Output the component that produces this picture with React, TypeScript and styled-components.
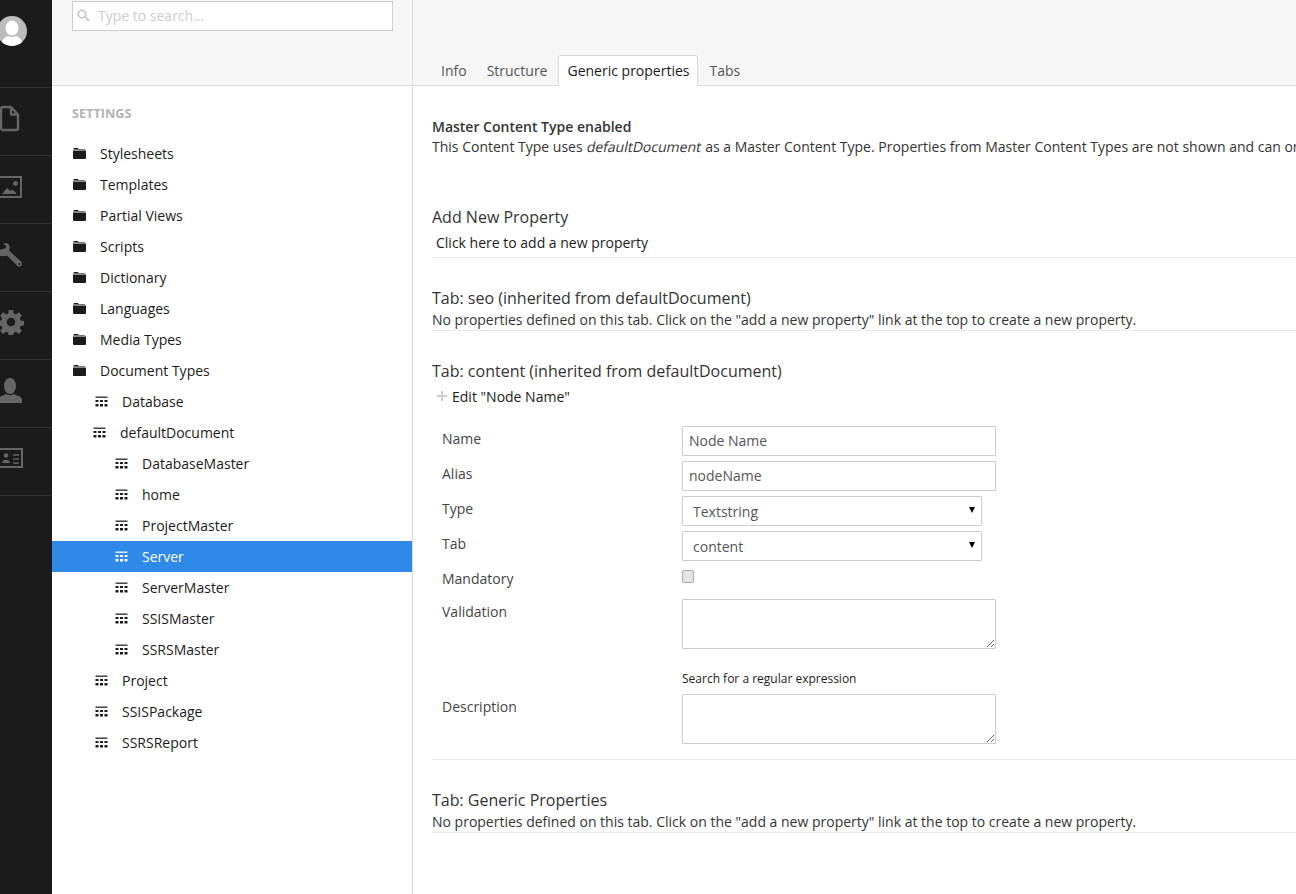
import React from 'react';
import styled, {createGlobalStyle} from 'styled-components';

const GlobalStyle = createGlobalStyle`
  html, body {
    margin: 0;
    padding: 0;
    height: 100%;
    overflow: hidden;
    background: #fff;
  }
  body {
    font-family: "Open Sans", "Liberation Sans", sans-serif;
    font-size: 14px;
    color: #343434;
  }
  * { box-sizing: border-box; }
`;

const Page = styled.div`
  display: flex;
  width: 1296px;
  height: 894px;
  overflow: hidden;
`;

const Rail = styled.nav`
  width: 52px;
  flex: none;
  background: #1b1b1b;
  overflow: hidden;
`;

const AvatarCell = styled.div`
  height: 88px;
  padding-top: 16px;
  border-bottom: 1px solid #333;
`;

const Avatar = styled.div`
  width: 30px;
  height: 30px;
  margin-left: -3px;
  border-radius: 50%;
  overflow: hidden;
  background: #bdbdbd;
  svg { display: block; }
`;

const RailItem = styled.div<{$lift: number}>`
  height: 68px;
  border-bottom: 1px solid #333;
  display: flex;
  align-items: center;
  padding-bottom: ${p => p.$lift}px;
  margin-left: -2px;
  color: #666;
  svg { display: block; }
`;

const TreePanel = styled.aside`
  width: 361px;
  flex: none;
  border-right: 1px solid #d9d9d9;
`;

const SearchBar = styled.div`
  height: 86px;
  background: #f6f6f6;
  border-bottom: 1px solid #d9d9d9;
  padding: 1px 19px 0 20px;
`;

const SearchBox = styled.div`
  height: 30px;
  background: #fff;
  border: 1px solid #ccc;
  display: flex;
  align-items: center;
  gap: 8px;
  padding: 0 0 2px 4px;
  color: #ccc;
  font-size: 14px;
`;

const SectionTitle = styled.h5`
  margin: 0;
  padding: 19px 0 0 20px;
  height: 52px;
  font-size: 12.7px;
  line-height: 17px;
  font-weight: 700;
  color: #b3b3b3;
`;

const TreeRow = styled.div<{$pad: number; $active?: boolean}>`
  height: 31px;
  display: flex;
  align-items: center;
  gap: 14px;
  width: 360px;
  padding-left: ${p => p.$pad}px;
  color: ${p => (p.$active ? '#fff' : '#1b1b1b')};
  background: ${p => (p.$active ? '#2e8ae6' : 'transparent')};
  svg { display: block; flex: none; }
`;

const Main = styled.main`
  flex: 1;
  min-width: 0;
  overflow: hidden;
`;

const TabBar = styled.div`
  height: 86px;
  background: #f6f6f6;
  border-bottom: 1px solid #d9d9d9;
  display: flex;
  align-items: flex-end;
  padding-left: 18px;
`;

const Tab = styled.div<{$active?: boolean}>`
  height: 31px;
  padding: 0 ${p => (p.$active ? '7px 0 8px' : '9px')};
  margin-bottom: -1px;
  margin-left: ${p => (p.$active ? 1 : 0)}px;
  margin-right: ${p => (p.$active ? 2 : 0)}px;
  line-height: 30px;
  color: ${p => (p.$active ? '#1b1b1b' : '#555')};
  background: ${p => (p.$active ? '#fff' : 'transparent')};
  border: 1px solid ${p => (p.$active ? '#d9d9d9' : 'transparent')};
  border-bottom-color: ${p => (p.$active ? '#fff' : 'transparent')};
  border-radius: 3px 3px 0 0;
`;

const Content = styled.div`
  padding: 31px 0 0 19px;
  white-space: nowrap;
`;

const Notice = styled.div`
  line-height: 20px;
  height: 89px;
  strong { font-weight: 600; }
`;

// the reference shows the upright face slanted, not the real italic
const Slanted = styled.span`
  display: inline-block;
  margin-left: 1px;
  transform: skewX(-12deg);
`;

const Section = styled.section<{$gap: number}>`
  margin-bottom: ${p => p.$gap}px;
  border-bottom: 1px solid #e9e9e9;
`;

const SectionHeading = styled.h4`
  margin: 0;
  font-size: 16px;
  font-weight: 400;
  line-height: 22px;
`;

const SectionText = styled.p`
  margin: 0;
  padding-top: 1px;
  line-height: 20px;
`;

const AddLink = styled.div`
  color: #1b1b1b;
  padding: 5px 0 4px 4px;
  line-height: 20px;
`;

const EditLink = styled.div`
  display: flex;
  align-items: center;
  gap: 5px;
  padding: 0 0 1px 5px;
  height: 29px;
  color: #1b1b1b;
`;

const FormGrid = styled.div`
  display: grid;
  grid-template-columns: 240px 1fr;
  padding: 15px 0 15px 10px;
`;

const FieldLabel = styled.label<{$height: number}>`
  height: ${p => p.$height}px;
  line-height: 20px;
  padding-top: 3px;
  color: #444;
`;

const FieldCell = styled.div<{$height: number}>`
  height: ${p => p.$height}px;
`;

const TextInput = styled.input`
  display: block;
  width: 314px;
  height: 30px;
  padding: 0 6px 2px;
  border: 1px solid #ccc;
  border-radius: 1px;
  font: 14px "Open Sans", "Liberation Sans", sans-serif;
  color: #555;
`;

const SelectWrap = styled.div`
  position: relative;
  width: 300px;
  &::after {
    content: '';
    position: absolute;
    right: 7px;
    top: 11px;
    border-left: 3px solid transparent;
    border-right: 3px solid transparent;
    border-top: 6px solid #000;
  }
`;

const Select = styled.select`
  display: block;
  appearance: none;
  width: 100%;
  height: 30px;
  padding: 0 10px;
  border: 1px solid #ccc;
  border-radius: 1px;
  background: #fff;
  font: 14px "Open Sans", "Liberation Sans", sans-serif;
  color: #555;
`;

const CheckBox = styled.span`
  display: block;
  width: 12px;
  height: 13px;
  margin-top: 4px;
  border: 1px solid #aaa;
  border-radius: 2px;
  background: #e4e4e4;
`;

const TextArea = styled.textarea`
  display: block;
  width: 314px;
  height: 50px;
  border: 1px solid #ccc;
  border-radius: 1px;
  background: #fff;
`;

const Hint = styled.div`
  padding-top: 21px;
  font-size: 12px;
  line-height: 17px;
  color: #1b1b1b;
`;

const FolderIcon = () => (
  <svg width="13" height="11" viewBox="0 0 13 11" fill="#1b1b1b">
    <path d="M1 0h4l1 1.500h-6zM0 2.500h13v7.500a1 1 0 0 1-1 1h-11a1 1 0 0 1-1-1z" />
    <rect x="1" y="1" width="11" height="1" fill="#777" />
  </svg>
);

const GridIcon = ({color}: {color: string}) => (
  <svg width="13" height="11" viewBox="0 0 13 11" fill={color}>
    <rect x="0.500" y="0" width="12" height="1" opacity="0.45" />
    <rect x="0.500" y="1" width="12" height="1" opacity="0.8" />
    {[4, 8].flatMap(y => [0.500, 5, 9.500].map(x => (
      <rect key={`${x}-${y}`} x={x} y={y} width="3" height={y === 4 ? 2 : 2.500} />
    )))}
  </svg>
);

const SearchIcon = () => (
  <svg width="13" height="13" viewBox="0 0 13 13" fill="none" stroke="#ccc" strokeWidth="1.700">
    <circle cx="5" cy="5" r="3.800" />
    <path d="M8 8l4 4" strokeWidth="2.200" />
  </svg>
);

const PlusIcon = () => (
  <svg width="10" height="10" viewBox="0 0 10 10" fill="#ccc">
    <path d="M4 0h2v4h4v2h-4v4h-2v-4h-4v-2h4z" />
  </svg>
);

const railIcons = [
  {
    lift: 6,
    icon: (
      <svg width="22" height="27" viewBox="0 0 22 27" fill="none" stroke="currentColor" strokeWidth="2.400">
        <path d="M5 2h8l7 7.500v13.500a2 2 0 0 1-2 2h-13a2 2 0 0 1-2-2v-19a2 2 0 0 1 2-2zM13 2v7.500h7" strokeLinejoin="round" />
      </svg>
    ),
  },
  {
    lift: 4,
    icon: (
      <svg width="25" height="23" viewBox="0 0 25 23" fill="none" stroke="currentColor" strokeWidth="2">
        <rect x="1" y="1" width="22" height="20" />
        <path d="M4 18l5-6 3.500 3 2-1.500 4.500 4.500z" fill="currentColor" stroke="none" />
        <circle cx="17.500" cy="7.500" r="2.400" fill="currentColor" stroke="none" />
      </svg>
    ),
  },
  {
    lift: 5,
    icon: (
      <svg width="25" height="26" viewBox="-2 0 25 26" fill="currentColor">
        <path d="M3 2C5 1 8 1 9 3C10 5 9.500 7 9 8.500L21 19.500C23 21.500 22 24.500 19.500 24.500C18 24.500 17.500 24 17 23.500L7 13.500C4 14.500 1 14.500 -2 13L-2 8L2 7.500L6 6L6 3.500Z" />
        <circle cx="19.500" cy="22" r="1" fill="#1b1b1b" />
      </svg>
    ),
  },
  {
    lift: 8,
    icon: (
      <svg width="26" height="26" viewBox="0 0 24 24" fill="currentColor">
        <path fillRule="evenodd" d="M10 1h4l.6 3.200 1.900.8 2.700-1.900 2.800 2.800-1.900 2.700.8 1.900 3.100.5v4l-3.100.6-.8 1.900 1.900 2.700-2.800 2.800-2.700-1.900-1.900.8-.6 3.100h-4l-.6-3.100-1.900-.8-2.700 1.900-2.800-2.800 1.900-2.700-.8-1.900-3.100-.6v-4l3.100-.5.8-1.900-1.900-2.700 2.800-2.800 2.700 1.900 1.900-.8zM12 8a4 4 0 1 0 0 8 4 4 0 0 0 0-8z" />
      </svg>
    ),
  },
  {
    lift: 6,
    icon: (
      <svg width="24" height="25" viewBox="0 0 24 25" fill="currentColor">
        <ellipse cx="12" cy="8" rx="6" ry="8" />
        <path d="M0 25v-4c0-2.500 5-3 8-5 2.500 1.500 5.500 1.500 8 0 3 2 8 2.500 8 5v4z" />
      </svg>
    ),
  },
  {
    lift: 8,
    icon: (
      <svg width="26" height="22" viewBox="0 0 26 22" fill="none" stroke="currentColor" strokeWidth="2">
        <rect x="1" y="2" width="23" height="18" />
        <circle cx="8" cy="8.500" r="2.300" fill="currentColor" stroke="none" />
        <path d="M4 16c0-2.500 2-3 4-3s4 .5 4 3z" fill="currentColor" stroke="none" />
        <path d="M15 8h6M15 12h6M15 16h6" strokeWidth="1.600" />
      </svg>
    ),
  },
];

type TreeItem = {label: string; icon: 'folder' | 'grid'; pad: number; active?: boolean};

const treeItems: TreeItem[] = [
  {label: 'Stylesheets', icon: 'folder', pad: 21},
  {label: 'Templates', icon: 'folder', pad: 21},
  {label: 'Partial Views', icon: 'folder', pad: 21},
  {label: 'Scripts', icon: 'folder', pad: 21},
  {label: 'Dictionary', icon: 'folder', pad: 21},
  {label: 'Languages', icon: 'folder', pad: 21},
  {label: 'Media Types', icon: 'folder', pad: 21},
  {label: 'Document Types', icon: 'folder', pad: 21},
  {label: 'Database', icon: 'grid', pad: 43},
  {label: 'defaultDocument', icon: 'grid', pad: 41},
  {label: 'DatabaseMaster', icon: 'grid', pad: 63},
  {label: 'home', icon: 'grid', pad: 63},
  {label: 'ProjectMaster', icon: 'grid', pad: 63},
  {label: 'Server', icon: 'grid', pad: 63, active: true},
  {label: 'ServerMaster', icon: 'grid', pad: 63},
  {label: 'SSISMaster', icon: 'grid', pad: 63},
  {label: 'SSRSMaster', icon: 'grid', pad: 63},
  {label: 'Project', icon: 'grid', pad: 43},
  {label: 'SSISPackage', icon: 'grid', pad: 43},
  {label: 'SSRSReport', icon: 'grid', pad: 43},
];

const NO_PROPS = 'No properties defined on this tab. Click on the "add a new property" link at the top to create a new property.';

function App() {
  return (
    <Page>
      <GlobalStyle />
      <Rail>
        <AvatarCell>
          <Avatar>
            <svg width="30" height="30" viewBox="0 0 30 30" fill="#fff">
              <ellipse cx="15" cy="12" rx="6.500" ry="7.500" />
              <path d="M4 30c0-7 5-9 7-10 2.500 1.500 5.500 1.500 8 0 2 1 7 3 7 10z" />
            </svg>
          </Avatar>
        </AvatarCell>
        {railIcons.map((item, i) => <RailItem key={i} $lift={item.lift}>{item.icon}</RailItem>)}
      </Rail>

      <TreePanel>
        <SearchBar>
          <SearchBox><SearchIcon />Type to search...</SearchBox>
        </SearchBar>
        <SectionTitle>SETTINGS</SectionTitle>
        {treeItems.map(item => (
          <TreeRow key={item.label} $pad={item.pad} $active={item.active}>
            {item.icon === 'folder' ? <FolderIcon /> : <GridIcon color={item.active ? '#fff' : '#1b1b1b'} />}
            {item.label}
          </TreeRow>
        ))}
      </TreePanel>

      <Main>
        <TabBar>
          <Tab>Info</Tab>
          <Tab>Structure</Tab>
          <Tab $active>Generic properties</Tab>
          <Tab>Tabs</Tab>
        </TabBar>
        <Content>
          <Notice>
            <strong>Master Content Type enabled</strong><br />
            This Content Type uses <Slanted>defaultDocument</Slanted> as a Master Content Type. Properties from Master Content Types are not shown and can only be edited on the Master Content Type itself
          </Notice>

          <Section $gap={29}>
            <SectionHeading>Add New Property</SectionHeading>
            <AddLink>Click here to add a new property</AddLink>
          </Section>

          <Section $gap={29}>
            <SectionHeading>Tab: seo (inherited from defaultDocument)</SectionHeading>
            <SectionText>{NO_PROPS}</SectionText>
          </Section>

          <Section $gap={29}>
            <SectionHeading>Tab: content (inherited from defaultDocument)</SectionHeading>
            <EditLink><PlusIcon />Edit "Node Name"</EditLink>
            <FormGrid>
              <FieldLabel $height={35}>Name</FieldLabel>
              <FieldCell $height={35}><TextInput defaultValue="Node Name" /></FieldCell>
              <FieldLabel $height={35}>Alias</FieldLabel>
              <FieldCell $height={35}><TextInput defaultValue="nodeName" /></FieldCell>
              <FieldLabel $height={35}>Type</FieldLabel>
              <FieldCell $height={35}>
                <SelectWrap><Select defaultValue="Textstring"><option>Textstring</option></Select></SelectWrap>
              </FieldCell>
              <FieldLabel $height={35}>Tab</FieldLabel>
              <FieldCell $height={35}>
                <SelectWrap><Select defaultValue="content"><option>content</option></Select></SelectWrap>
              </FieldCell>
              <FieldLabel $height={33}>Mandatory</FieldLabel>
              <FieldCell $height={33}><CheckBox /></FieldCell>
              <FieldLabel $height={95}>Validation</FieldLabel>
              <FieldCell $height={95}>
                <TextArea />
                <Hint>Search for a regular expression</Hint>
              </FieldCell>
              <FieldLabel $height={50}>Description</FieldLabel>
              <FieldCell $height={50}><TextArea /></FieldCell>
            </FormGrid>
          </Section>

          <Section $gap={0}>
            <SectionHeading>Tab: Generic Properties</SectionHeading>
            <SectionText>{NO_PROPS}</SectionText>
          </Section>
        </Content>
      </Main>
    </Page>
  );
}

export default App;
